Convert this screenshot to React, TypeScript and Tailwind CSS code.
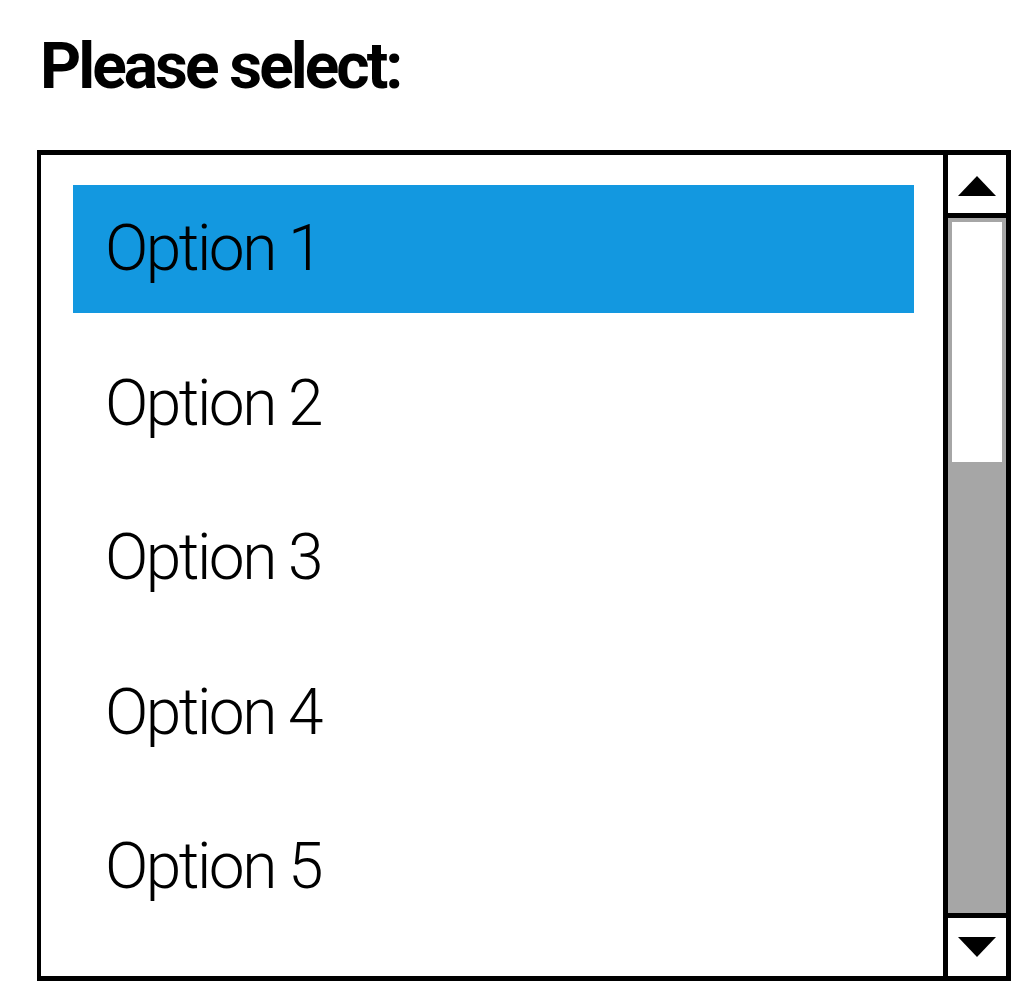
import React from "react";

const font = { fontFamily: "Roboto, 'Noto Sans', sans-serif" };

export default function App() {
  const options = ["Option 1", "Option 2", "Option 3", "Option 4", "Option 5"];
  return (
    <div className="w-[1011px] h-[982px] bg-white pl-[37px] pt-[35px] overflow-hidden" style={font}>
      <h1 className="text-[64px] leading-[64px] font-bold text-black tracking-[-3px] pl-[3px]">Please select:</h1>
      <div className="mt-[51px] flex w-[974px] h-[831px] border-black border-t-[5px] border-r-[5px] border-b-[5px] border-l-4 bg-white">
        <div className="flex-1 overflow-hidden pt-[30px] pl-[32px] pr-[29px] flex flex-col gap-[26.5px]">
          {options.map((o, i) => (
            <div
              key={o}
              className={
                "h-[128px] shrink-0 flex items-center pl-[32px] text-[64px] leading-none font-light tracking-[-2.5px] text-black " +
                (i === 0 ? "bg-[#1398e0]" : "bg-white")
              }
            >
              {o}
            </div>
          ))}
        </div>
        <div className="w-[63px] shrink-0 border-l-[5px] border-black flex flex-col">
          <div className="h-[58px] shrink-0 flex items-center justify-center bg-white">
            <svg width="38" height="20" viewBox="0 0 38 20" className="mt-[3px]">
              <polygon points="19,0 38,20 0,20" fill="#000" />
            </svg>
          </div>
          <div className="h-[5px] shrink-0 bg-black" />
          <div className="flex-1 bg-[#a6a6a6] px-[4px] pt-[4px]">
            <div className="h-[240px] bg-white" />
          </div>
          <div className="h-[5px] shrink-0 bg-black" />
          <div className="h-[58px] shrink-0 flex items-center justify-center bg-white">
            <svg width="38" height="20" viewBox="0 0 38 20">
              <polygon points="0,0 38,0 19,20" fill="#000" />
            </svg>
          </div>
        </div>
      </div>
    </div>
  );
}
